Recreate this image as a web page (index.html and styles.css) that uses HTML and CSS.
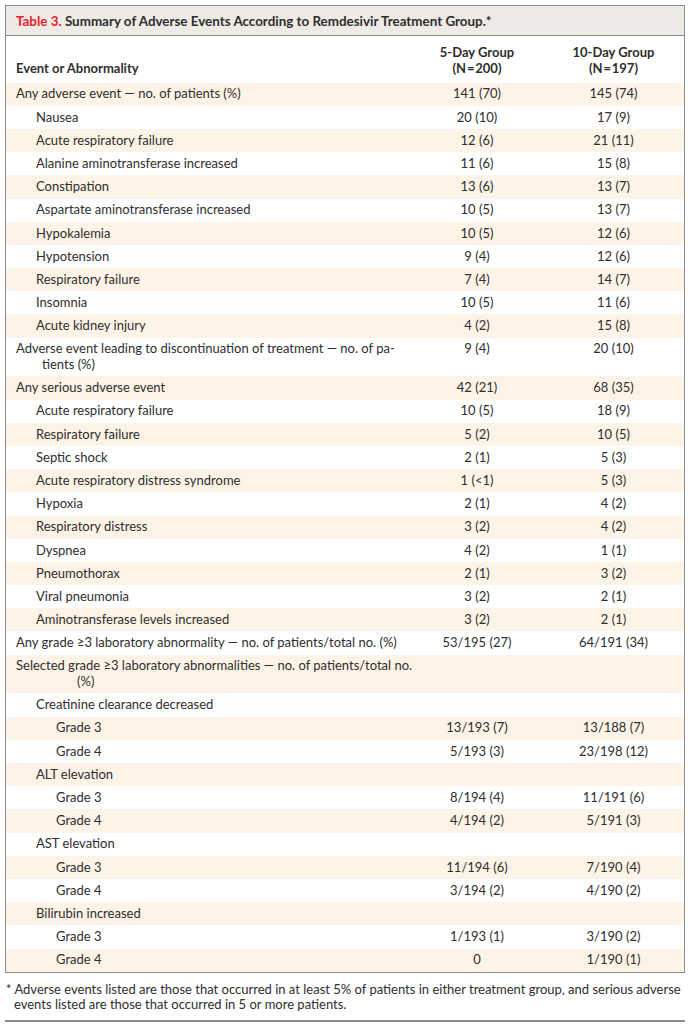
FILE: index.html
```html
<!DOCTYPE html>
<html lang="en">
<head>
<meta charset="utf-8">
<title>Table 3</title>
<link rel="stylesheet" href="styles.css">
</head>
<body>
<div class="page">
  <div class="box">
    <div class="title"><span class="label">Table 3.</span> Summary of Adverse Events According to Remdesivir Treatment Group.*</div>
    <table class="data">
      <colgroup>
        <col class="c-label">
        <col class="c-five">
        <col class="c-ten">
      </colgroup>
      <thead>
        <tr>
          <th class="lab">Event or Abnormality</th>
          <th class="num">5-Day Group<br>(N&#8202;=&#8202;200)</th>
          <th class="num ten">10-Day Group<br>(N&#8202;=&#8202;197)</th>
        </tr>
      </thead>
      <tbody>
        <tr><td class="l1">Any adverse event — no. of patients (%)</td><td class="num">141 (70)</td><td class="num ten">145 (74)</td></tr>
        <tr><td class="l2">Nausea</td><td class="num">20 (10)</td><td class="num ten">17 (9)</td></tr>
        <tr><td class="l2">Acute respiratory failure</td><td class="num">12 (6)</td><td class="num ten">21 (11)</td></tr>
        <tr><td class="l2">Alanine aminotransferase increased</td><td class="num">11 (6)</td><td class="num ten">15 (8)</td></tr>
        <tr><td class="l2">Constipation</td><td class="num">13 (6)</td><td class="num ten">13 (7)</td></tr>
        <tr><td class="l2">Aspartate aminotransferase increased</td><td class="num">10 (5)</td><td class="num ten">13 (7)</td></tr>
        <tr><td class="l2">Hypokalemia</td><td class="num">10 (5)</td><td class="num ten">12 (6)</td></tr>
        <tr><td class="l2">Hypotension</td><td class="num">9 (4)</td><td class="num ten">12 (6)</td></tr>
        <tr><td class="l2">Respiratory failure</td><td class="num">7 (4)</td><td class="num ten">14 (7)</td></tr>
        <tr><td class="l2">Insomnia</td><td class="num">10 (5)</td><td class="num ten">11 (6)</td></tr>
        <tr><td class="l2">Acute kidney injury</td><td class="num">4 (2)</td><td class="num ten">15 (8)</td></tr>
        <tr><td class="l1"><span class="line">Adverse event leading to discontinuation of treatment — no. of pa-</span><span class="line cont a">tients (%)</span></td><td class="num">9 (4)</td><td class="num ten">20 (10)</td></tr>
        <tr><td class="l1">Any serious adverse event</td><td class="num">42 (21)</td><td class="num ten">68 (35)</td></tr>
        <tr><td class="l2">Acute respiratory failure</td><td class="num">10 (5)</td><td class="num ten">18 (9)</td></tr>
        <tr><td class="l2">Respiratory failure</td><td class="num">5 (2)</td><td class="num ten">10 (5)</td></tr>
        <tr><td class="l2">Septic shock</td><td class="num">2 (1)</td><td class="num ten">5 (3)</td></tr>
        <tr><td class="l2">Acute respiratory distress syndrome</td><td class="num">1 (&lt;1)</td><td class="num ten">5 (3)</td></tr>
        <tr><td class="l2">Hypoxia</td><td class="num">2 (1)</td><td class="num ten">4 (2)</td></tr>
        <tr><td class="l2">Respiratory distress</td><td class="num">3 (2)</td><td class="num ten">4 (2)</td></tr>
        <tr><td class="l2">Dyspnea</td><td class="num">4 (2)</td><td class="num ten">1 (1)</td></tr>
        <tr><td class="l2">Pneumothorax</td><td class="num">2 (1)</td><td class="num ten">3 (2)</td></tr>
        <tr><td class="l2">Viral pneumonia</td><td class="num">3 (2)</td><td class="num ten">2 (1)</td></tr>
        <tr><td class="l2">Aminotransferase levels increased</td><td class="num">3 (2)</td><td class="num ten">2 (1)</td></tr>
        <tr><td class="l1">Any grade ≥3 laboratory abnormality — no. of patients/total no. (%)</td><td class="num">53/195 (27)</td><td class="num ten">64/191 (34)</td></tr>
        <tr><td class="l1"><span class="line">Selected grade ≥3 laboratory abnormalities — no. of patients/total no.</span><span class="line cont b">(%)</span></td><td class="num"></td><td class="num ten"></td></tr>
        <tr><td class="l2">Creatinine clearance decreased</td><td class="num"></td><td class="num ten"></td></tr>
        <tr><td class="l3">Grade 3</td><td class="num">13/193 (7)</td><td class="num ten">13/188 (7)</td></tr>
        <tr><td class="l3">Grade 4</td><td class="num">5/193 (3)</td><td class="num ten">23/198 (12)</td></tr>
        <tr><td class="l2">ALT elevation</td><td class="num"></td><td class="num ten"></td></tr>
        <tr><td class="l3">Grade 3</td><td class="num">8/194 (4)</td><td class="num ten">11/191 (6)</td></tr>
        <tr><td class="l3">Grade 4</td><td class="num">4/194 (2)</td><td class="num ten">5/191 (3)</td></tr>
        <tr><td class="l2">AST elevation</td><td class="num"></td><td class="num ten"></td></tr>
        <tr><td class="l3">Grade 3</td><td class="num">11/194 (6)</td><td class="num ten">7/190 (4)</td></tr>
        <tr><td class="l3">Grade 4</td><td class="num">3/194 (2)</td><td class="num ten">4/190 (2)</td></tr>
        <tr><td class="l2">Bilirubin increased</td><td class="num"></td><td class="num ten"></td></tr>
        <tr><td class="l3">Grade 3</td><td class="num">1/193 (1)</td><td class="num ten">3/190 (2)</td></tr>
        <tr><td class="l3">Grade 4</td><td class="num">0</td><td class="num ten">1/190 (1)</td></tr>
      </tbody>
    </table>
  </div>
  <p class="foot"><span class="star">*</span> Adverse events listed are those that occurred in at least 5% of patients in either treatment group, and serious adverse events listed are those that occurred in 5 or more patients.</p>
  <div class="rule"></div>
</div>
</body>
</html>
```

FILE: styles.css
```css
html, body {
  margin: 0;
  padding: 0;
  background: #ffffff;
}

body {
  font-family: "Lato", "Liberation Sans", sans-serif;
  font-size: 13px;
  color: #2e2e2e;
}

.page {
  padding: 5px 5px 0 5px;
}

.box {
  border: 1.5px solid #8c8c8c;
}

.title {
  background: #eeeae5;
  border-bottom: 1.5px solid #8c8c8c;
  height: 29px;
  line-height: 30px;
  padding-left: 10px;
  font-size: 13.4px;
  font-weight: bold;
  white-space: nowrap;
}

.title .label {
  color: #e8202e;
}

.data {
  width: 100%;
  border-collapse: collapse;
  table-layout: fixed;
}

.c-label { width: 402px; }
.c-five { width: 138px; }
.c-ten { width: auto; }

.data th {
  font-weight: bold;
  line-height: 15.6px;
  padding: 9px 0 6.4px 0;
  vertical-align: bottom;
}

.data th.lab {
  text-align: left;
  padding-left: 10px;
}

.data td {
  line-height: 15.6px;
  padding: 3.8px 0;
  vertical-align: top;
  white-space: nowrap;
}

.num {
  text-align: center;
}

.data .ten {
  padding-right: 3px;
}

.data tbody tr:nth-child(odd) {
  background: #fdf4e7;
}

.l1 { padding-left: 10px !important; }
.l2 { padding-left: 30px !important; }
.l3 { padding-left: 50px !important; }

.line {
  display: block;
}

.line.cont.a { padding-left: 26px; }
.line.cont.b { padding-left: 61px; }

.foot {
  margin: 0;
  padding: 9px 0 0 9px;
  text-indent: -8px;
  line-height: 15.6px;
}

.rule {
  margin-top: 7px;
  border-top: 2px solid #8c8c8c;
}
```
